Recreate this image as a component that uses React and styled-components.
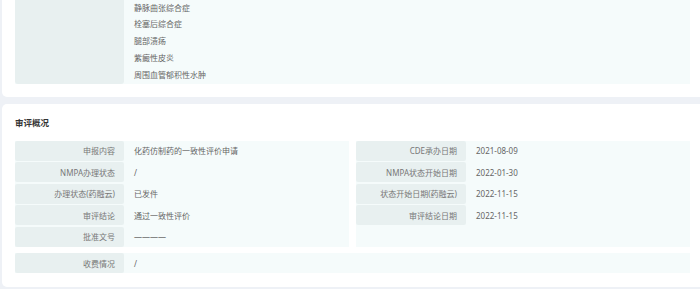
import React from 'react';
import styled, { createGlobalStyle } from 'styled-components';

const GlobalStyle = createGlobalStyle`
  html, body {
    margin: 0;
    padding: 0;
    background: #eef1f6;
    overflow: hidden;
  }
  body {
    font-family: 'Noto Sans', 'Noto Sans CJK SC', sans-serif;
    -webkit-font-smoothing: antialiased;
  }
`;

const Page = styled.div`
  width: 700px;
  height: 289px;
  overflow: hidden;
  padding-left: 2px;
  box-sizing: border-box;
`;

const Card = styled.section`
  background: #ffffff;
  border-radius: ${props => (props.$scrolled ? '0 0 5px 5px' : '5px')};
  margin: ${props => (props.$scrolled ? '-10px -6px 7px 0' : '0 -6px 0 0')};
  padding: ${props => (props.$scrolled ? '0 15px 13px 13px' : '12px 15px 13.5px 13px')};
`;

const Title = styled.h3`
  margin: 0 0 11px;
  font-size: 8.5px;
  line-height: 14px;
  font-weight: 700;
  color: #333;
`;

const ListTable = styled.div`
  display: grid;
  grid-template-columns: 109px 1fr;
  width: 675px;
  background: #f5fbfb;
`;

const LabelBlock = styled.div`
  background: #e8f0f0;
  border-radius: 0 0 3px 3px;
`;

const LineList = styled.ul`
  list-style: none;
  margin: 0;
  padding: 9.5px 10px 0.5px;
`;

const Line = styled.li`
  font-size: 8px;
  line-height: 16.8px;
  color: #666;
`;

const Grid = styled.div`
  display: grid;
  grid-template-columns: 1fr 1fr;
  column-gap: 7px;
  width: 675px;
`;

const Column = styled.div`
  display: flex;
  flex-direction: column;
  gap: 1.5px;
  background: #f5fbfb;
`;

const Row = styled.div`
  display: grid;
  grid-template-columns: ${props => props.$labelWidth || '109px'} 1fr;
  height: 20px;
  background: #f5fbfb;
  margin-top: ${props => props.$offset || '0'};
  width: ${props => (props.$full ? '675px' : 'auto')};
`;

const Label = styled.div`
  display: flex;
  align-items: center;
  justify-content: flex-end;
  padding-right: 9px;
  background: #e8f0f0;
  border-radius: 2px;
  font-size: 8px;
  color: #777;
  white-space: nowrap;
`;

const Value = styled.div`
  display: flex;
  align-items: center;
  padding-left: 10px;
  font-size: 8px;
  color: #666;
  white-space: nowrap;
`;

const symptoms = ['静脉曲张综合症', '栓塞后综合症', '腿部溃疡', '紫癜性皮炎', '周围血管郁积性水肿'];

const leftRows = [
  ['申报内容', '化药仿制药的一致性评价申请'],
  ['NMPA办理状态', '/'],
  ['办理状态(药融云)', '已发件'],
  ['审评结论', '通过一致性评价'],
  ['批准文号', '————'],
];

const rightRows = [
  ['CDE承办日期', '2021-08-09'],
  ['NMPA状态开始日期', '2022-01-30'],
  ['状态开始日期(药融云)', '2022-11-15'],
  ['审评结论日期', '2022-11-15'],
];

const App = () => (
  <Page>
    <GlobalStyle />
    <Card $scrolled>
      <ListTable>
        <LabelBlock />
        <LineList>
          {symptoms.map(s => (
            <Line key={s}>{s}</Line>
          ))}
        </LineList>
      </ListTable>
    </Card>

    <Card>
      <Title>审评概况</Title>
      <Grid>
        <Column>
          {leftRows.map(([l, v]) => (
            <Row key={l}>
              <Label>{l}</Label>
              <Value>{v}</Value>
            </Row>
          ))}
        </Column>
        <Column>
          {rightRows.map(([l, v]) => (
            <Row key={l} $labelWidth="110px">
              <Label>{l}</Label>
              <Value>{v}</Value>
            </Row>
          ))}
        </Column>
      </Grid>
      <Row $full $offset="6.5px">
        <Label>收费情况</Label>
        <Value>/</Value>
      </Row>
    </Card>
  </Page>
);

export default App;
